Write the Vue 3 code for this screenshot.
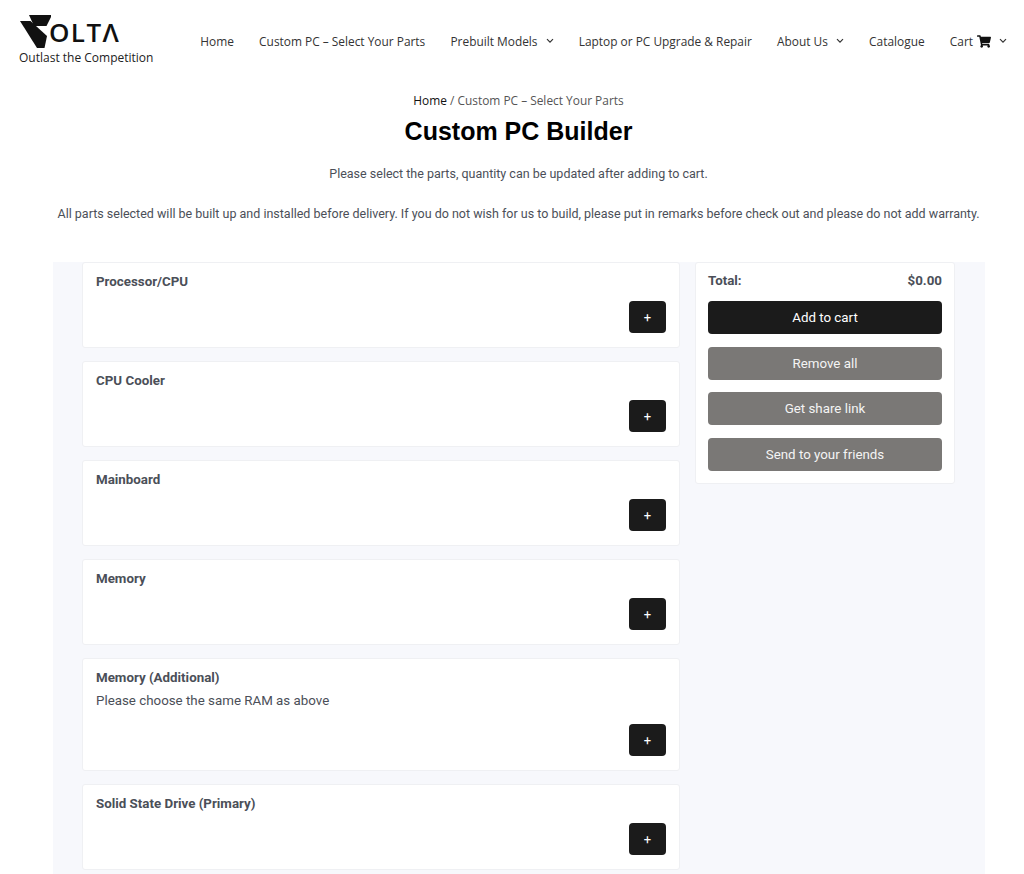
<template>
  <div class="page">
    <header class="site-header">
      <div class="brand">
        <div class="logo">
          <svg class="mark" width="32" height="34" viewBox="0 0 32 34">
            <path d="M10 0H33L27.5 11H15Z" fill="#111" />
            <path d="M1 6H11.5L28 21L25.5 33H18Z" fill="#111" />
          </svg>
          <span class="wordmark">OLTΛ</span>
        </div>
        <div class="tagline">Outlast the Competition</div>
      </div>
      <nav class="nav">
        <a v-for="item in navItems" :key="item.label" class="nav-item">
          <span>{{ item.label }}</span>
          <svg v-if="item.cart" class="cart" width="14" height="13" viewBox="0 0 576 512">
            <path fill="#111" d="M528 301L575 93c3-15-8-29-23-29H159l-9-45C148 8 138 0 126 0H24C11 0 0 11 0 24v16c0 13 11 24 24 24h70l70 343c-17 10-28 28-28 49 0 31 25 56 56 56s56-25 56-56c0-16-6-30-17-40h210c-11 10-17 24-17 40 0 31 25 56 56 56s56-25 56-56c0-22-13-41-32-51l6-24c3-15-8-29-23-29H217l-7-32h295c11 0 21-8 23-19z" />
          </svg>
          <svg v-if="item.caret" class="caret" width="8" height="6" viewBox="0 0 8 6">
            <path d="M1 1.2L4 4.2L7 1.2" fill="none" stroke="#333" stroke-width="1.2" />
          </svg>
        </a>
      </nav>
    </header>

    <main class="content">
      <div class="intro-block">
        <div class="crumbs"><span class="crumb-home">Home</span> / Custom PC – Select Your Parts</div>
        <h1 class="title">Custom PC Builder</h1>
        <p class="intro first">Please select the parts, quantity can be updated after adding to cart.</p>
        <p class="intro">All parts selected will be built up and installed before delivery. If you do not wish for us to build, please put in remarks before check out and please do not add warranty.</p>
      </div>

      <section class="builder">
        <div class="parts">
          <div v-for="part in parts" :key="part.name" class="card part">
            <div class="part-name">{{ part.name }}</div>
            <div v-if="part.note" class="part-note">{{ part.note }}</div>
            <div class="part-actions">
              <button class="add-btn">+</button>
            </div>
          </div>
        </div>
        <aside class="card summary">
          <div class="total">
            <span>Total:</span>
            <span>$0.00</span>
          </div>
          <button class="btn dark">Add to cart</button>
          <button v-for="label in greyButtons" :key="label" class="btn grey">{{ label }}</button>
        </aside>
      </section>
    </main>
  </div>
</template>

<script setup>
const navItems = [
  { label: 'Home' },
  { label: 'Custom PC – Select Your Parts' },
  { label: 'Prebuilt Models', caret: true },
  { label: 'Laptop or PC Upgrade & Repair' },
  { label: 'About Us', caret: true },
  { label: 'Catalogue' },
  { label: 'Cart', cart: true, caret: true }
]

const parts = [
  { name: 'Processor/CPU' },
  { name: 'CPU Cooler' },
  { name: 'Mainboard' },
  { name: 'Memory' },
  { name: 'Memory (Additional)', note: 'Please choose the same RAM as above' },
  { name: 'Solid State Drive (Primary)' }
]

const greyButtons = ['Remove all', 'Get share link', 'Send to your friends']
</script>

<style>
html,
body {
  margin: 0;
  background: #fff;
  overflow: hidden;
}
</style>

<style scoped>
.page {
  height: 874px;
  overflow: hidden;
  font-family: Roboto, "Liberation Sans", sans-serif;
  color: #4b4f58;
}

.site-header {
  display: flex;
  align-items: flex-start;
  justify-content: space-between;
  padding: 15px 17px 0 19px;
  height: 72px;
  box-sizing: border-box;
}

.logo {
  display: flex;
  align-items: flex-start;
  height: 34px;
}

.wordmark {
  font-family: "Open Sans", "Liberation Sans", sans-serif;
  font-size: 26px;
  line-height: 34px;
  font-weight: 600;
  letter-spacing: 1.4px;
  color: #111;
  margin-left: -2px;
}

.tagline {
  font-family: "Open Sans", "Liberation Sans", sans-serif;
  font-size: 12px;
  line-height: 16px;
  color: #222;
  margin-top: 1px;
}

.nav {
  display: flex;
  gap: 25.2px;
  margin-top: 18px;
  font-family: "Open Sans", "Liberation Sans", sans-serif;
  font-size: 11.9px;
  line-height: 16px;
  color: #333;
}

.nav-item {
  display: flex;
  align-items: center;
  white-space: nowrap;
}

.cart {
  margin-left: 4px;
}

.caret {
  margin-left: 8px;
}

.intro-block {
  padding-left: 13px;
  text-align: center;
}

.crumbs {
  font-size: 11.9px;
  line-height: 16px;
  margin-top: 20px;
  font-family: "Open Sans", "Liberation Sans", sans-serif;
  color: #555;
}

.crumb-home {
  color: #111;
}

.title {
  margin: 7px 0 0;
  font-family: "Liberation Sans", Arial, sans-serif;
  font-size: 25px;
  line-height: 32px;
  font-weight: 700;
  color: #000;
}

.intro {
  margin: 24px 0 0;
  font-size: 12.5px;
  line-height: 16px;
}

.intro.first {
  margin-top: 19px;
}

.builder {
  display: flex;
  align-items: flex-start;
  gap: 15px;
  margin: 40px 39px 0 53px;
  padding: 0 30px 0 29px;
  background: #f7f8fc;
  min-height: 640px;
}

.parts {
  display: flex;
  flex-direction: column;
  gap: 13px;
  width: 598px;
  flex: none;
}

.card {
  background: #fff;
  border: 1px solid #eff0f3;
  border-radius: 3px;
  box-sizing: border-box;
}

.part {
  padding: 11px 13px 14px;
}

.part-name {
  font-size: 13.33px;
  line-height: 16px;
  font-weight: 700;
}

.part-note {
  font-size: 13.33px;
  line-height: 16px;
  margin-top: 7px;
  padding-bottom: 4px;
}

.part-actions {
  display: flex;
  justify-content: flex-end;
  margin-top: 11px;
}

.add-btn {
  width: 37px;
  height: 32px;
  border: none;
  border-radius: 4px;
  background: #1b1b1b;
  color: #fff;
  font-family: inherit;
  font-size: 13px;
  padding: 0;
}

.summary {
  width: 260px;
  flex: none;
  padding: 10px 12px 12px;
  display: flex;
  flex-direction: column;
}

.total {
  display: flex;
  justify-content: space-between;
  font-size: 13.33px;
  line-height: 16px;
  font-weight: 700;
  margin-bottom: 12px;
}

.btn {
  height: 33px;
  border: none;
  border-radius: 4px;
  color: #fff;
  font-family: inherit;
  font-size: 13.33px;
  font-weight: 400;
  padding: 0;
}

.btn.dark {
  background: #1b1b1b;
}

.btn.grey {
  background: #7a7876;
  margin-top: 12.5px;
  color: #f4f4f4;
}
</style>
